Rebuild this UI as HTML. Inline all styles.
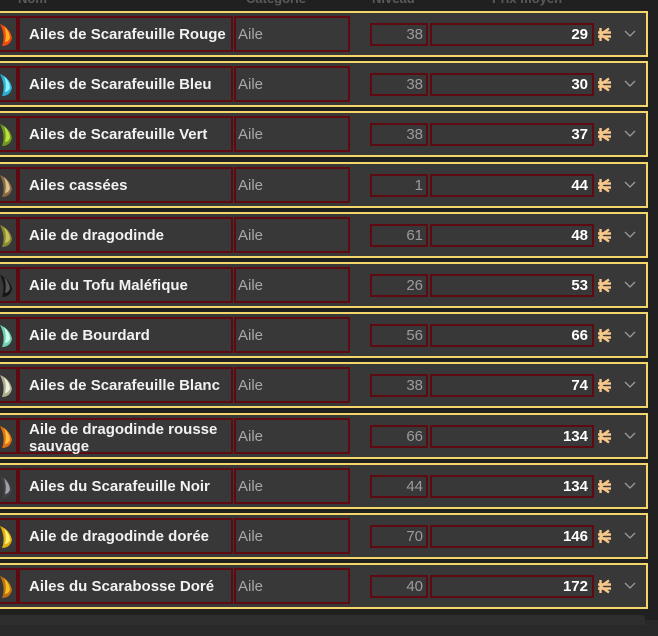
<!DOCTYPE html>
<html><head><meta charset="utf-8">
<style>
html,body{margin:0;padding:0;}
body{width:658px;height:636px;background:#202020;position:relative;overflow:hidden;font-family:"Liberation Sans",sans-serif;}
.h{position:absolute;top:-9px;color:#5a5a5a;font-size:13px;font-weight:bold;}
.row{position:absolute;left:-2px;width:646px;height:42px;border:2px solid #f3d66a;background:#383838;}
.b{position:absolute;border:2px solid #5e0a10;box-sizing:border-box;}
.ic{left:-4px;top:3px;width:22px;height:36px;}
.nm{left:18px;top:3px;width:215px;height:36px;color:#f2f2f2;font-weight:bold;font-size:15px;padding-left:9px;display:flex;align-items:center;line-height:17px;white-space:nowrap;}
.ct{left:234px;top:3px;width:116px;height:36px;color:#a8a8a8;font-size:15px;padding-left:2px;display:flex;align-items:center;}
.lv{left:370px;top:10px;width:58px;height:23px;color:#9c9c9c;font-size:15px;text-align:right;padding-right:3px;line-height:19px;}
.pr{left:430px;top:10px;width:164px;height:23px;color:#fff;font-weight:bold;font-size:15px;text-align:right;padding-right:4px;line-height:19px;}
.coin{position:absolute;left:597px;top:14px;}
.chev{position:absolute;left:624px;top:17px;}
.bot{position:absolute;left:0;top:615px;width:645px;height:10px;background:#2e2e2e;border-radius:0 3px 0 0;}
.bot2{position:absolute;left:0;top:620px;width:658px;height:16px;background:#292929;}
</style></head><body>
<div class="h" style="left:18px">Nom</div>
<div class="h" style="left:246px">Catégorie</div>
<div class="h" style="left:372px">Niveau</div>
<div class="h" style="left:492px">Prix moyen</div>

<div class="bot2"></div><div class="bot"></div>

<script>
var d=[["Ailes de Scarafeuille Rouge",38,29,"#f04a10","#ffb020"],
["Ailes de Scarafeuille Bleu",38,30,"#2ab0d8","#8ef0ff"],
["Ailes de Scarafeuille Vert",38,37,"#6a9a20","#c0e040"],
["Ailes cassées",1,44,"#8a6a40","#d8c090"],
["Aile de dragodinde",61,48,"#8a8a30","#c8c060"],
["Aile du Tofu Maléfique",26,53,"#151515","#555"],
["Aile de Bourdard",56,66,"#70d0b0","#d0fff0"],
["Ailes de Scarafeuille Blanc",38,74,"#b0b090","#f0f0e0"],
["Aile de dragodinde rousse sauvage",66,134,"#e07010","#ffc040"],
["Ailes du Scarafeuille Noir",44,134,"#404048","#a0a0a8"],
["Aile de dragodinde dorée",70,146,"#e0b010","#fff070"],
["Ailes du Scarabosse Doré",40,172,"#c07010","#f0c020"]];
var h="";
for(var i=0;i<d.length;i++){
 var t=Math.round(11+i*50.2);
 var n=d[i][0];
 var nm=n=="Aile de dragodinde rousse sauvage"?'<span style="display:block;height:34px;overflow:hidden;padding-top:3px">Aile de dragodinde rousse<br>sauvage</span>':n;
 h+='<div class="row" style="top:'+t+'px">'+
 '<div class="b ic"><svg width="18" height="32" viewBox="0 0 18 32"><path d="M2 6 Q12 10 14 20 Q12 28 4 28 Q8 18 2 6Z" fill="'+d[i][3]+'"/><path d="M6 8 Q12 14 12 20 Q10 24 7 24 Q9 16 6 8Z" fill="'+d[i][4]+'"/></svg></div>'+
 '<div class="b nm">'+nm+'</div>'+
 '<div class="b ct">Aile</div>'+
 '<div class="b lv">'+d[i][1]+'</div>'+
 '<div class="b pr">'+d[i][2]+'</div>'+
 '<svg class="coin" width="15" height="15" viewBox="0 0 15 15"><g stroke="#f8c88a" stroke-width="2.4" fill="none"><path d="M3.5 1V14"/><path d="M3.5 7.5L12 1.5M3.5 7.5L12 13.5"/><path d="M1 5.5H14M1 9.5H14"/></g></svg>'+
 '<svg class="chev" width="12" height="8" viewBox="0 0 12 8"><path d="M1 1L6 6L11 1" stroke="#9a9a9a" stroke-width="1.3" fill="none"/></svg>'+
 '</div>';
}
document.body.insertAdjacentHTML("beforeend",h);
</script>
</body></html>
